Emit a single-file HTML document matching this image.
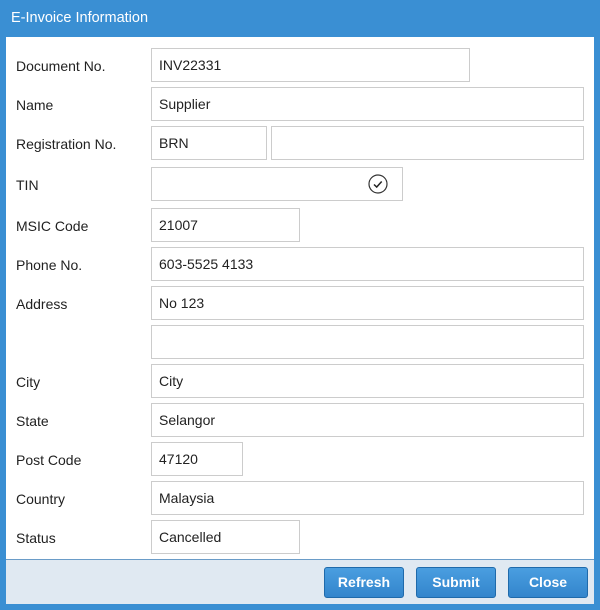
<!DOCTYPE html>
<html><head><style>
body{margin:0;width:600px;height:610px;background:#3a8fd3;font-family:"Liberation Sans",Arial,sans-serif;position:relative;overflow:hidden}
.hd{position:absolute;left:11px;top:10px;color:#fff;font-size:14.5px}
.body{position:absolute;left:6px;top:37px;width:588px;height:522px;background:#fff}
.ft{position:absolute;left:6px;top:559px;width:588px;height:45px;background:#e0e9f2;border-top:1px solid #6a9cc8;box-sizing:border-box}
.l{position:absolute;left:16px;font-size:14px;color:#222}
.i{position:absolute;height:34px;border:1px solid #ccc;box-sizing:border-box;font-size:14px;color:#222;padding:8px 0 0 7px;background:#fff}
.b{position:absolute;top:567px;height:31px;border:1px solid #1f6aab;border-radius:3px;background:linear-gradient(#4a9ee0,#3385cc);color:#fff;font-weight:bold;font-size:14px;text-align:center;line-height:29px;box-sizing:border-box}
</style></head><body>
<div class="hd">E-Invoice Information</div>
<div class="body"></div>
<div class="ft"></div>
<div class="l" style="top:58px">Document No.</div><div class="i" style="left:151px;top:48px;width:319px">INV22331</div>
<div class="l" style="top:97px">Name</div><div class="i" style="left:151px;top:87px;width:433px">Supplier</div>
<div class="l" style="top:136px">Registration No.</div><div class="i" style="left:151px;top:126px;width:116px">BRN</div><div class="i" style="left:271px;top:126px;width:313px"></div>
<div class="l" style="top:177px">TIN</div><div class="i" style="left:151px;top:167px;width:252px"><svg style="position:absolute;left:216px;top:6px" width="20" height="20" viewBox="0 0 20 20"><circle cx="10" cy="10" r="9" fill="none" stroke="#333" stroke-width="1.2"/><path d="M6 10.5l2.7 2.5 5-5.5" fill="none" stroke="#222" stroke-width="1.5"/></svg></div>
<div class="l" style="top:218px">MSIC Code</div><div class="i" style="left:151px;top:208px;width:149px">21007</div>
<div class="l" style="top:257px">Phone No.</div><div class="i" style="left:151px;top:247px;width:433px">603-5525 4133</div>
<div class="l" style="top:296px">Address</div><div class="i" style="left:151px;top:286px;width:433px">No 123</div>
<div class="i" style="left:151px;top:325px;width:433px"></div>
<div class="l" style="top:374px">City</div><div class="i" style="left:151px;top:364px;width:433px">City</div>
<div class="l" style="top:413px">State</div><div class="i" style="left:151px;top:403px;width:433px">Selangor</div>
<div class="l" style="top:452px">Post Code</div><div class="i" style="left:151px;top:442px;width:92px">47120</div>
<div class="l" style="top:491px">Country</div><div class="i" style="left:151px;top:481px;width:433px">Malaysia</div>
<div class="l" style="top:530px">Status</div><div class="i" style="left:151px;top:520px;width:149px">Cancelled</div>
<div class="b" style="left:324px;width:80px">Refresh</div>
<div class="b" style="left:416px;width:80px">Submit</div>
<div class="b" style="left:508px;width:80px">Close</div>
</body></html>
